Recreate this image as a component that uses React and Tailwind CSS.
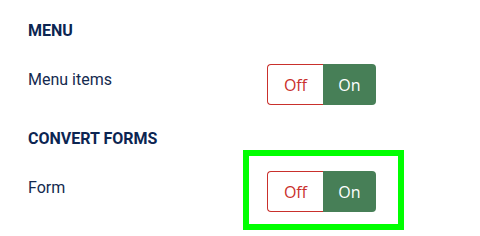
import React from "react";

function Toggle() {
  return (
    <div className="flex h-[41px] w-[109px] font-['Open_Sans',sans-serif] text-[16px]">
      <div className="flex w-[56px] items-center justify-center rounded-l-[4px] border border-r-0 border-[#c9302c] text-[#c9302c]">
        Off
      </div>
      <div className="flex w-[53px] items-center justify-center rounded-r-[4px] bg-[#477f57] text-white">
        On
      </div>
    </div>
  );
}

export default function App() {
  return (
    <div className="h-[236px] w-[480px] bg-white pl-[28px] pt-[21px] font-['Roboto',sans-serif]">
      <h3 className="text-[16px] font-bold leading-[20px] text-[#0c2552]">MENU</h3>
      <div className="mt-[23px] flex">
        <div className="w-[239px] pt-[4px] text-[16px] leading-[24px] text-[#142a4f]">Menu items</div>
        <Toggle />
      </div>
      <h3 className="mt-[24px] text-[16px] font-bold leading-[20px] text-[#0c2552]">CONVERT FORMS</h3>
      <div className="mt-[22px] flex">
        <div className="w-[239px] pt-[5px] text-[16px] leading-[24px] text-[#142a4f]">Form</div>
        <div className="relative">
          <Toggle />
          <div className="pointer-events-none absolute left-[-24px] top-[-21px] h-[80px] w-[161px] border-[6px] border-[#00ff00]" />
        </div>
      </div>
    </div>
  );
}
